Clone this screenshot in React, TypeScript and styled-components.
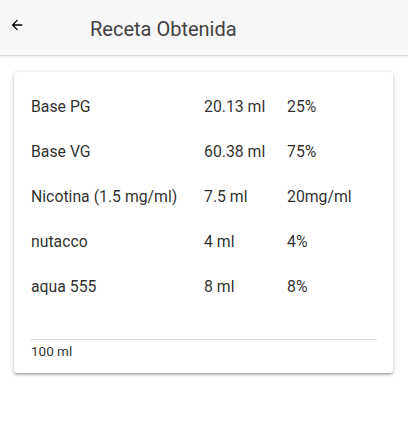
import styled, { createGlobalStyle } from "styled-components";

const GlobalStyle = createGlobalStyle`
  html, body {
    margin: 0;
    padding: 0;
    background: #ffffff;
    font-family: Roboto, "Noto Sans", sans-serif;
  }
`;

const ingredients = [
  { name: "Base PG", amount: "20.13 ml", percent: "25%" },
  { name: "Base VG", amount: "60.38 ml", percent: "75%" },
  { name: "Nicotina (1.5 mg/ml)", amount: "7.5 ml", percent: "20mg/ml" },
  { name: "nutacco", amount: "4 ml", percent: "4%" },
  { name: "aqua 555", amount: "8 ml", percent: "8%" },
];

function App() {
  return (
    <>
      <GlobalStyle />
      <Page>
        <Toolbar>
          <BackButton aria-label="back">
            <svg width="16" height="16" viewBox="0 0 24 24">
              <path
                d="M20 11H7.83l5.59-5.59L12 4l-8 8 8 8 1.41-1.41L7.83 13H20v-2z"
                fill="#000"
              />
            </svg>
          </BackButton>
          <Title>Receta Obtenida</Title>
        </Toolbar>

        <Card>
          <List>
            {ingredients.map((item) => (
              <Row key={item.name}>
                <Cell>{item.name}</Cell>
                <Cell>{item.amount}</Cell>
                <Cell>{item.percent}</Cell>
              </Row>
            ))}
          </List>
          <Footer>100 ml</Footer>
        </Card>
      </Page>
    </>
  );
}

export default App;

const Page = styled.div`
  width: 408px;
  min-height: 441px;
  background: #fff;
`;

const Toolbar = styled.header`
  height: 55px;
  display: flex;
  align-items: center;
  background: #f7f7f7;
  border-bottom: 1px solid #dcdcdc;
  box-shadow: 0 1px 2px rgba(0, 0, 0, 0.08);
`;

const BackButton = styled.button`
  width: 22px;
  height: 22px;
  margin-left: 9px;
  margin-top: -5px;
  padding: 0;
  border: none;
  background: transparent;
  display: flex;
  align-items: center;
  justify-content: flex-start;
`;

const Title = styled.h1`
  margin: 2px 0 0 59px;
  font-size: 20px;
  font-weight: 400;
  color: #424242;
  letter-spacing: 0;
`;

const Card = styled.section`
  margin: 16px 15px 0 14px;
  padding: 12px 16px 0 16px;
  background: #fff;
  border-radius: 3px;
  box-shadow: 0 2px 2px 0 rgba(0, 0, 0, 0.14), 0 3px 1px -2px rgba(0, 0, 0, 0.12),
    0 1px 5px 0 rgba(0, 0, 0, 0.2);
`;

const List = styled.div`
  display: flex;
  flex-direction: column;
  padding-bottom: 30px;
`;

const Row = styled.div`
  display: grid;
  grid-template-columns: 173px 83px 1fr;
  align-items: center;
  height: 45px;
  padding-left: 1px;
`;

const Cell = styled.span`
  font-size: 15.8px;
  color: rgba(0, 0, 0, 0.84);
  white-space: nowrap;
`;

const Footer = styled.div`
  border-top: 1px solid #e0e0e0;
  padding: 2px 0 13px 1px;
  font-size: 13.5px;
  line-height: 18px;
  color: rgba(0, 0, 0, 0.84);
`;
